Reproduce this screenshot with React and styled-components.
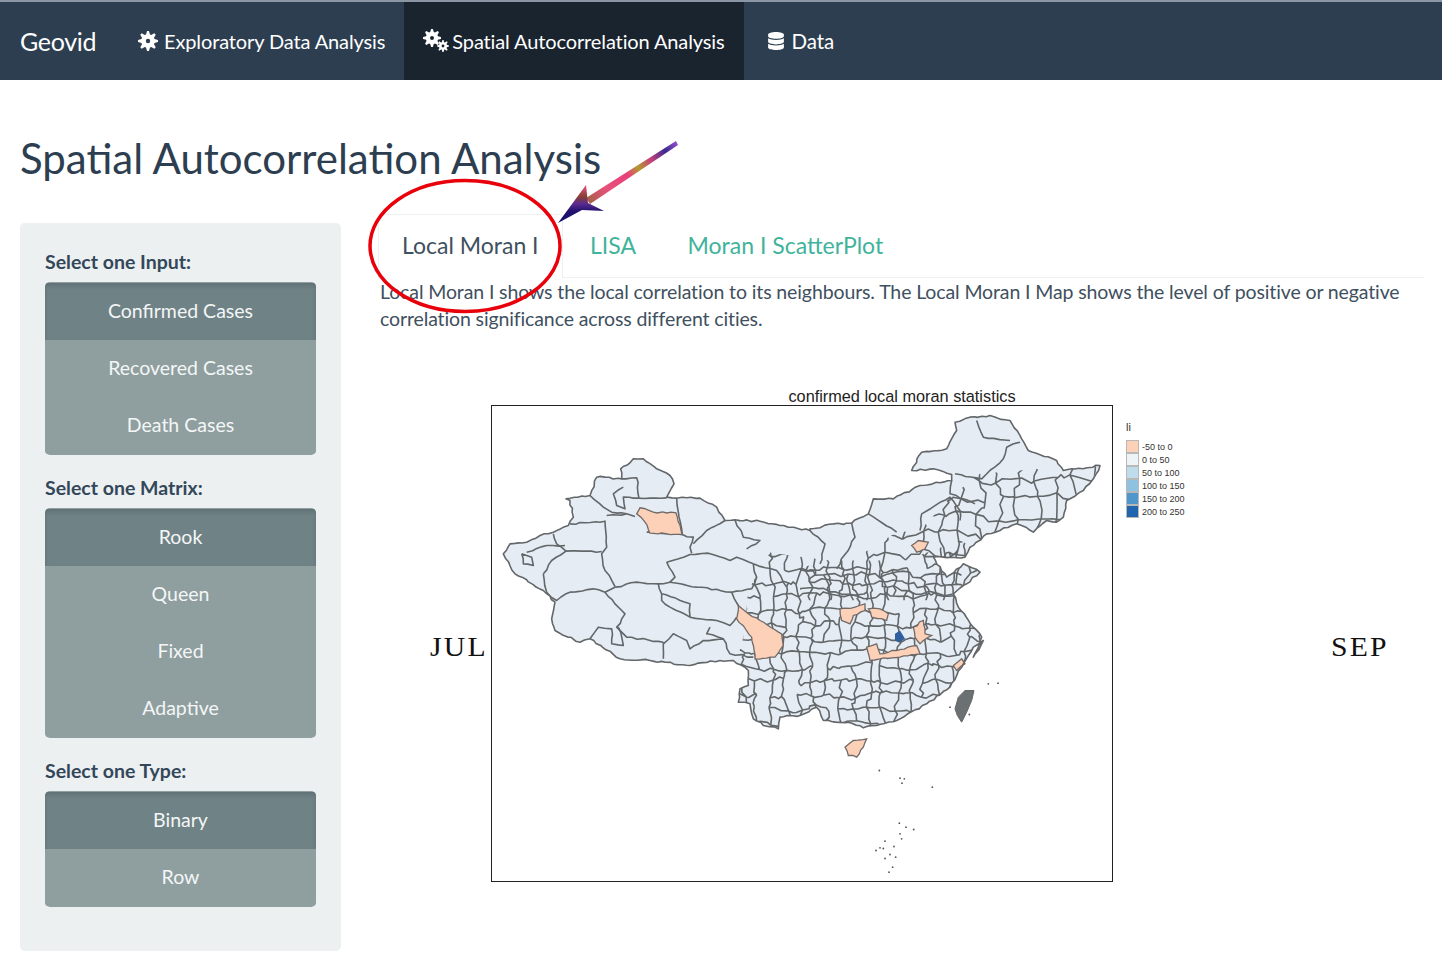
import styled, { createGlobalStyle } from "styled-components";
import { FaDatabase } from "react-icons/fa";

function random(seed) {
    let a = seed;
    return () => {
        a = (a + 0x6d2b79f5) | 0;
        let t = Math.imul(a ^ (a >>> 15), 1 | a);
        t = (t + Math.imul(t ^ (t >>> 7), 61 | t)) ^ t;
        return ((t ^ (t >>> 14)) >>> 0) / 4294967296;
    };
}

const rough = random(41);

// breaks a straight traced segment into small steps so borders look like real ones
function roughen(list, step = 5, amp = 1.4) {
    const out = [];
    list.forEach(([ax, ay], i) => {
        out.push([ax, ay]);
        if (i === list.length - 1) return;
        const [bx, by] = list[i + 1];
        const n = Math.floor(Math.hypot(bx - ax, by - ay) / step);
        for (let k = 1; k < n; k++) {
            out.push([
                +(ax + ((bx - ax) * k) / n + (rough() - 0.5) * amp * 2).toFixed(1),
                +(ay + ((by - ay) * k) / n + (rough() - 0.5) * amp * 2).toFixed(1),
            ]);
        }
    });
    return out;
}

// all map coordinates are page pixels, the traced lists come from 3x crops
const crop = (ox, oy) => (list) => list.map(([x, y]) => [ox + x / 3, oy + y / 3]);
const west = crop(490, 400);
const east = crop(800, 400);
const south = crop(720, 640);
const closed = (list) => [...list, list[0]];

const OUTLINE = roughen(closed([
    ...west([[40,460],[60,430],[110,425],[150,405],[190,395],[235,375],[250,350],[240,300],[228,295],[300,285],[320,230],[395,235],[392,205],[430,175],[460,175],[500,205],[540,225],[552,250],[530,290],[560,293],[630,293],[680,320],[705,360],[735,358],[810,362],[870,375],[960,390]]),
    ...east([[30,385],[100,370],[155,368],[205,340],[220,295],[280,295],[360,255],[455,240],[455,222],[400,205],[335,210],[365,155],[440,145],[470,90],[465,65],[510,50],[570,45],[630,60],[665,115],[685,150],[770,180],[790,210],[900,195],[880,235],[850,270],[800,300],[790,350],[770,365],[740,360],[700,395],[650,370],[600,390],[560,400],[510,440],[495,470],[430,470],[400,470],[440,530],[490,490],[540,515],[500,550],[460,580],[475,620],[520,680],[545,710],[520,770]]),
    ...south([[790,0],[760,20],[730,70],[690,140],[620,190],[530,240],[470,255],[430,262],[385,245],[310,240],[290,200],[240,225],[180,230],[175,265],[130,255],[100,235],[90,190],[55,185],[60,145],[85,135],[85,90],[40,60],[0,60]]),
    [690, 665], [650, 660],
    ...west([[390,775],[300,715],[270,725],[195,690],[185,655],[195,605],[160,570],[75,520]]),
]), 4, 1);

const DENSE_AREA = [[735,668],[745,630],[748,590],[770,552],[790,555],[830,560],[905,560],[960,540],[1000,560],[1000,700],[900,770],[720,745]];
const MEDIUM_AREA = [...east([[0,500],[60,490],[110,505],[170,470],[290,395],[360,390],[450,290],[540,220],[900,190],[800,400],[600,420],[500,490],[450,600],[0,600]])];

const BIG_LINES = [
    ...[
        [[300,285],[340,320],[365,335],[410,340],[435,348]],
        [[395,235],[440,232],[447,293],[530,292]],
        [[447,293],[400,290],[405,325],[380,315],[370,280],[400,260]],
        [[240,370],[345,362],[350,440],[335,460],[345,510],[375,558]],
        [[228,452],[335,453]],
        [[350,345],[410,340]],
        [[560,293],[565,335],[577,402],[610,410],[600,440],[605,458]],
        [[470,395],[577,402]],
        [[705,360],[650,390],[610,430]],
        [[735,358],[760,410],[810,420],[770,445]],
        [[530,485],[600,462],[655,458],[720,480],[740,470],[790,490]],
        [[530,485],[555,530],[540,545],[620,560],[725,575],[785,565]],
        [[375,560],[440,545],[505,550],[540,545]],
        [[505,550],[515,580],[600,610],[600,650],[540,620],[515,600],[515,580]],
        [[600,650],[680,660],[720,675],[740,650]],
        [[725,575],[745,615]],
        [[160,520],[185,480],[228,452]],
        [[160,520],[170,575],[200,600],[240,575],[310,565],[345,575],[375,560]],
        [[345,575],[375,610],[405,640],[380,680],[410,710],[520,725]],
        [[300,715],[325,680],[365,685],[365,730],[400,735],[385,680]],
        [[520,725],[520,775]],
        [[520,730],[550,700],[590,720],[600,745],[640,720],[700,715],[720,760],[790,770]],
        [[660,680],[650,700],[700,715]],
        [[190,400],[200,430],[228,452]],
        [[95,460],[125,470],[130,495],[100,490],[95,460]],
        [[110,455],[170,435],[225,435]],
        [[790,490],[800,530],[785,565]],
        [[790,490],[860,510],[890,560]],
    ].map(west),
    ...[
        [[30,390],[75,430],[60,490]],
        [[155,368],[165,410],[110,505]],
        [[205,340],[290,395]],
        [[360,390],[365,340],[450,290],[480,330],[480,360]],
        [[455,240],[450,280],[525,310]],
        [[465,220],[545,235],[610,175],[620,140],[660,125]],
        [[530,60],[550,110],[630,120]],
    ].map(east),
].map((l) => roughen(l, 5, 0.9));

const PEACH = [
    west([[440,340],[450,322],[490,335],[558,337],[577,402],[480,398],[465,365]]),
    west([[745,615],[775,640],[810,660],[875,700],[880,735],[855,770],[795,775],[785,710],[740,655]]),
    east([[335,435],[355,420],[385,425],[375,445],[350,455]]),
    east([[120,625],[165,620],[195,610],[195,630],[160,645],[150,670],[125,660]]),
    east([[205,625],[240,625],[265,640],[260,660],[215,650]]),
    east([[340,680],[370,660],[375,700],[395,705],[360,730],[345,710]]),
    south([[440,20],[470,10],[480,40],[530,30],[590,15],[600,40],[540,50],[480,55],[450,60]]),
    south([[700,75],[725,55],[735,70],[710,90]]),
    south([[375,320],[400,300],[440,295],[430,320],[410,350],[385,345]]),
].map((p) => roughen(closed(p), 4, 0.8));

const BLUE = east([[285,700],[300,690],[315,715],[300,725],[285,720]]);
const TAIWAN = south([[705,205],[715,170],[735,150],[762,150],[755,180],[740,215],[725,245],[712,225]]);
const ISLANDS = south([[478,390],[540,413],[553,415],[546,428],[637,440],[538,548],[558,560],[581,567],[540,580],[545,595],[495,602],[522,618],[480,622],[490,624],[468,630],[510,642],[527,650],[495,654],[518,680],[507,695],[805,130],[834,128],[690,200],[748,222]]);

const toPoints = (list) => list.map((p) => p.join(",")).join(" ");

// jittered grid with wobbly edges, good enough for the small county borders
function buildMesh(x0, y0, cols, rows, size, seed) {
    const rnd = random(seed);
    const jit = () => (rnd() - 0.5) * size * 0.6;
    const grid = [];
    for (let i = 0; i <= cols; i++) {
        grid[i] = [];
        for (let j = 0; j <= rows; j++) {
            grid[i][j] = [x0 + i * size + jit(), y0 + j * size + jit()];
        }
    }
    const edge = ([ax, ay], [bx, by]) => {
        const wob = () => (rnd() - 0.5) * size * 0.32;
        const p1 = [ax + (bx - ax) / 3 + wob(), ay + (by - ay) / 3 + wob()];
        const p2 = [ax + ((bx - ax) * 2) / 3 + wob(), ay + ((by - ay) * 2) / 3 + wob()];
        return `M${ax.toFixed(1)} ${ay.toFixed(1)}L${p1[0].toFixed(1)} ${p1[1].toFixed(1)}L${p2[0].toFixed(1)} ${p2[1].toFixed(1)}L${bx.toFixed(1)} ${by.toFixed(1)}`;
    };
    let d = "";
    for (let i = 0; i <= cols; i++) {
        for (let j = 0; j <= rows; j++) {
            if (i < cols && rnd() > 0.12) d += edge(grid[i][j], grid[i + 1][j]);
            if (j < rows && rnd() > 0.12) d += edge(grid[i][j], grid[i][j + 1]);
        }
    }
    return d;
}

const DENSE_MESH = buildMesh(715, 540, 21, 17, 14, 7);
const MEDIUM_MESH = buildMesh(790, 440, 17, 13, 19, 19);

// eight toothed gear, the old font awesome cog reads like this at small size
function gearPath(cx, cy, outer, inner, hole) {
    let d = "";
    for (let i = 0; i < 32; i++) {
        const phase = i % 4;
        const r = phase < 2 ? outer : inner;
        const a = ((i - 0.5) * Math.PI * 2) / 32;
        d += `${i ? "L" : "M"}${(cx + r * Math.cos(a)).toFixed(2)} ${(cy + r * Math.sin(a)).toFixed(2)}`;
    }
    d += `ZM${cx - hole} ${cy}a${hole} ${hole} 0 1 0 ${hole * 2} 0a${hole} ${hole} 0 1 0 ${-hole * 2} 0Z`;
    return d;
}

const LEGEND = [
    ["#fdd0b8", "-50 to 0"],
    ["#eef3f8", "0 to 50"],
    ["#bfdcec", "50 to 100"],
    ["#8fc1e0", "100 to 150"],
    ["#4f97cb", "150 to 200"],
    ["#2166ac", "200 to 250"],
];

const SIDE_GROUPS = [
    { label: "Select one Input:", items: ["Confirmed Cases", "Recovered Cases", "Death Cases"] },
    { label: "Select one Matrix:", items: ["Rook", "Queen", "Fixed", "Adaptive"] },
    { label: "Select one Type:", items: ["Binary", "Row"] },
];

function ChinaMap() {
    return (
        <MapSvg viewBox="492 406 620 474">
            <defs>
                <clipPath id="china">
                    <polygon points={toPoints(OUTLINE)} />
                </clipPath>
                <clipPath id="dense">
                    <polygon points={toPoints(DENSE_AREA)} />
                </clipPath>
                <clipPath id="medium">
                    <polygon points={toPoints(MEDIUM_AREA)} />
                </clipPath>
            </defs>
            <polygon points={toPoints(OUTLINE)} fill="#e6ecf3" />
            <g clipPath="url(#china)" fill="none" stroke="#63676a" strokeWidth="1.6" strokeLinejoin="round">
                <g clipPath="url(#dense)">
                    <path d={DENSE_MESH} />
                </g>
                <g clipPath="url(#medium)">
                    <path d={MEDIUM_MESH} />
                </g>
                {BIG_LINES.map((l, i) => (
                    <polyline key={i} points={toPoints(l)} />
                ))}
            </g>
            {PEACH.map((p, i) => (
                <polygon key={i} points={toPoints(p)} fill="#fdd0b8" stroke="#6f6a68" strokeWidth="1.3" />
            ))}
            <polygon points={toPoints(BLUE)} fill="#2f5f9e" />
            <polygon points={toPoints(OUTLINE)} fill="none" stroke="#63676a" strokeWidth="1.6" strokeLinejoin="round" />
            <polygon points={toPoints(TAIWAN)} fill="#6b7072" stroke="#666" />
            {ISLANDS.map(([x, y], i) => (
                <circle key={i} cx={x} cy={y} r="0.9" fill="#555" />
            ))}
        </MapSvg>
    );
}

function App() {
    return (
        <Page>
            <GlobalStyle />
            <Navbar>
                <Brand>Geovid</Brand>
                <NavItem>
                    <svg width="20" height="20" viewBox="0 0 20 20" fill="#fff">
                        <path fillRule="evenodd" d={gearPath(10, 10, 10, 6.8, 2.2)} />
                    </svg>
                    Exploratory Data Analysis
                </NavItem>
                <NavItem active>
                    <svg width="26" height="24" viewBox="0 0 26 24" fill="#fff">
                        <path fillRule="evenodd" d={gearPath(9, 9, 9, 6.2, 2)} />
                        <path fillRule="evenodd" d={gearPath(20, 17, 6, 4, 1.4)} />
                    </svg>
                    Spatial Autocorrelation Analysis
                </NavItem>
                <DataItem>
                    <FaDatabase size={18} />
                    Data
                </DataItem>
            </Navbar>
            <Content>
                <Title>Spatial Autocorrelation Analysis</Title>
                <Columns>
                    <Sidebar>
                        {SIDE_GROUPS.map((group) => (
                            <div key={group.label}>
                                <GroupLabel>{group.label}</GroupLabel>
                                <ButtonGroup>
                                    {group.items.map((item, i) => (
                                        <SideButton key={item} active={i === 0}>
                                            {item}
                                        </SideButton>
                                    ))}
                                </ButtonGroup>
                            </div>
                        ))}
                    </Sidebar>
                    <Main>
                        <Tabs>
                            <Tab active>Local Moran I</Tab>
                            <Tab>LISA</Tab>
                            <Tab>Moran I ScatterPlot</Tab>
                        </Tabs>
                        <Intro>
                            Local Moran I shows the local correlation to its neighbours. The Local Moran I Map shows the level of
                            positive or negative correlation significance across different cities.
                        </Intro>
                        <PlotGrid>
                            <PlotTitle>confirmed local moran statistics</PlotTitle>
                            <MonthLabel>JUL</MonthLabel>
                            <MapFrame>
                                <ChinaMap />
                            </MapFrame>
                            <Legend>
                                <LegendTitle>li</LegendTitle>
                                {LEGEND.map(([color, text]) => (
                                    <LegendRow key={text}>
                                        <Swatch color={color} />
                                        {text}
                                    </LegendRow>
                                ))}
                            </Legend>
                            <MonthLabel>SEP</MonthLabel>
                        </PlotGrid>
                    </Main>
                </Columns>
            </Content>
            <Annotations viewBox="0 0 1442 974">
                <defs>
                    <linearGradient id="stripes" x1="678" y1="143" x2="590" y2="202" gradientUnits="userSpaceOnUse">
                        <stop offset="0" stopColor="#9a4fd0" />
                        <stop offset="0.14" stopColor="#3a2a90" />
                        <stop offset="0.3" stopColor="#c8407a" />
                        <stop offset="0.44" stopColor="#b09a30" />
                        <stop offset="0.56" stopColor="#e8407a" />
                        <stop offset="0.8" stopColor="#e8507a" />
                        <stop offset="1" stopColor="#a8604a" />
                    </linearGradient>
                    <linearGradient id="arrowHead" x1="0" y1="185" x2="0" y2="223" gradientUnits="userSpaceOnUse">
                        <stop offset="0" stopColor="#f0508a" />
                        <stop offset="0.3" stopColor="#8a4030" />
                        <stop offset="0.5" stopColor="#5a2a90" />
                        <stop offset="0.7" stopColor="#20106a" />
                        <stop offset="1" stopColor="#14107a" />
                    </linearGradient>
                </defs>
                <ellipse cx="465" cy="246" rx="95" ry="65.5" fill="none" stroke="#e8000b" strokeWidth="3.5" />
                <polygon points="676,141 678,145 590,204 586,198" fill="url(#stripes)" />
                <polygon points="558,223 586,185 588,203 604,211 582,210" fill="url(#arrowHead)" />
            </Annotations>
        </Page>
    );
}

export default App;

const GlobalStyle = createGlobalStyle`
    body {
        margin: 0;
        background: #fff;
        font-family: Lato, "Open Sans", sans-serif;
        color: #2c3e50;
    }
`;

const Page = styled.div`
    position: relative;
    width: 1442px;
    height: 974px;
    overflow: hidden;
`;

const Navbar = styled.nav`
    display: flex;
    height: 78px;
    margin-top: 2px;
    padding-left: 20px;
    background: #2c3e50;
    box-shadow: 0 -2px 0 #8a96a3;
    color: #fff;
`;

const Brand = styled.div`
    display: flex;
    align-items: center;
    width: 99px;
    font-size: 25px;
    letter-spacing: -0.3px;
`;

const NavItem = styled.a`
    display: flex;
    align-items: center;
    gap: ${(props) => (props.active ? "3px" : "6px")};
    padding: 0 19px;
    font-size: 20px;
    letter-spacing: -0.12px;
    background: ${(props) => (props.active ? "#1a242f" : "transparent")};

    svg {
        flex-shrink: 0;
    }
`;

const DataItem = styled(NavItem)`
    margin-left: 4px;
    gap: 7px;
    font-size: 20.5px;
`;

const Content = styled.div`
    padding: 0 18px 0 20px;
`;

const Title = styled.h1`
    height: 80px;
    margin: 0;
    padding-top: 53px;
    font-size: 42px;
    line-height: 50px;
    font-weight: 400;
    color: #2c3e50;
    box-sizing: content-box;
`;

const Columns = styled.div`
    display: grid;
    grid-template-columns: 321px 1fr;
    column-gap: 37px;
    margin-top: 1px;
`;

const Sidebar = styled.aside`
    display: flex;
    flex-direction: column;
    gap: 19px;
    box-sizing: border-box;
    height: 728px;
    margin-top: 9px;
    padding: 25px 25px 0;
    background: #ecf0f1;
    border-radius: 5px;
`;

const GroupLabel = styled.div`
    font-size: 19.5px;
    font-weight: 700;
    line-height: 28px;
    margin-bottom: 6px;
    color: #34475a;
`;

const ButtonGroup = styled.div`
    display: flex;
    flex-direction: column;
    padding: 1px 0;
    background: #8f9fa0;
    border-radius: 5px;
    overflow: hidden;
`;

const SideButton = styled.div`
    display: flex;
    align-items: center;
    justify-content: center;
    box-sizing: border-box;
    height: 57px;
    padding-bottom: 2px;
    font-size: 19.5px;
    color: #f4f6f6;
    background: ${(props) => (props.active ? "#6f8286" : "#8f9fa0")};
    box-shadow: ${(props) => (props.active ? "inset 0 3px 4px rgba(0, 0, 0, 0.13)" : "none")};
`;

const Main = styled.main`
    min-width: 0;
`;

const Tabs = styled.div`
    display: flex;
    height: 63px;
    border-bottom: 1px solid #ecf0f1;
`;

const Tab = styled.div`
    display: flex;
    align-items: center;
    box-sizing: border-box;
    height: 64px;
    padding: 0 23px 3px;
    margin-right: 3.5px;
    font-size: 23px;
    color: ${(props) => (props.active ? "#3f5060" : "#3fb39b")};
    background: ${(props) => (props.active ? "#fff" : "transparent")};
    border: 1px solid ${(props) => (props.active ? "#ecf0f1" : "transparent")};
    border-bottom: none;
    border-radius: 5px 5px 0 0;
`;

const Intro = styled.p`
    margin: 0;
    padding-left: 2px;
    font-size: 19.5px;
    line-height: 27px;
    letter-spacing: -0.12px;
    color: #3f5060;
`;

const PlotGrid = styled.div`
    display: grid;
    grid-template-columns: 61px 622px 218px auto;
    grid-template-rows: 19px 477px;
    margin: 54px 0 0 52px;
`;

const PlotTitle = styled.div`
    grid-column: 2;
    grid-row: 1;
    padding-left: 200px;
    text-align: center;
    font-family: "Liberation Sans", Arial, sans-serif;
    font-size: 16.3px;
    line-height: 20px;
    color: #222;
    white-space: nowrap;
`;

const MonthLabel = styled.div`
    grid-row: 2;
    align-self: center;
    padding-top: 8px;
    font-family: "Liberation Serif", serif;
    font-size: 27px;
    letter-spacing: 2px;
    color: #111;
    transform: scaleX(1.1);
    transform-origin: left center;
`;

const MapFrame = styled.div`
    grid-row: 2;
    box-sizing: border-box;
    width: 622px;
    height: 477px;
    border: 1.5px solid #222;
    background: #fff;
`;

const MapSvg = styled.svg`
    display: block;
    width: 100%;
    height: 100%;
`;

const Legend = styled.div`
    grid-row: 2;
    padding: 12px 0 0 13px;
    font-family: "Liberation Sans", Arial, sans-serif;
    font-size: 9px;
    color: #333;
`;

const LegendTitle = styled.div`
    margin-bottom: 3px;
    font-size: 11px;
    line-height: 20px;
`;

const LegendRow = styled.div`
    display: flex;
    align-items: center;
    gap: 3px;
    height: 13px;
`;

const Swatch = styled.span`
    width: 13px;
    height: 13px;
    box-sizing: border-box;
    background: ${(props) => props.color};
    border: 1px solid #b8b8b8;
`;

const Annotations = styled.svg`
    position: absolute;
    left: 0;
    top: 0;
    width: 1442px;
    height: 974px;
    pointer-events: none;
`;
